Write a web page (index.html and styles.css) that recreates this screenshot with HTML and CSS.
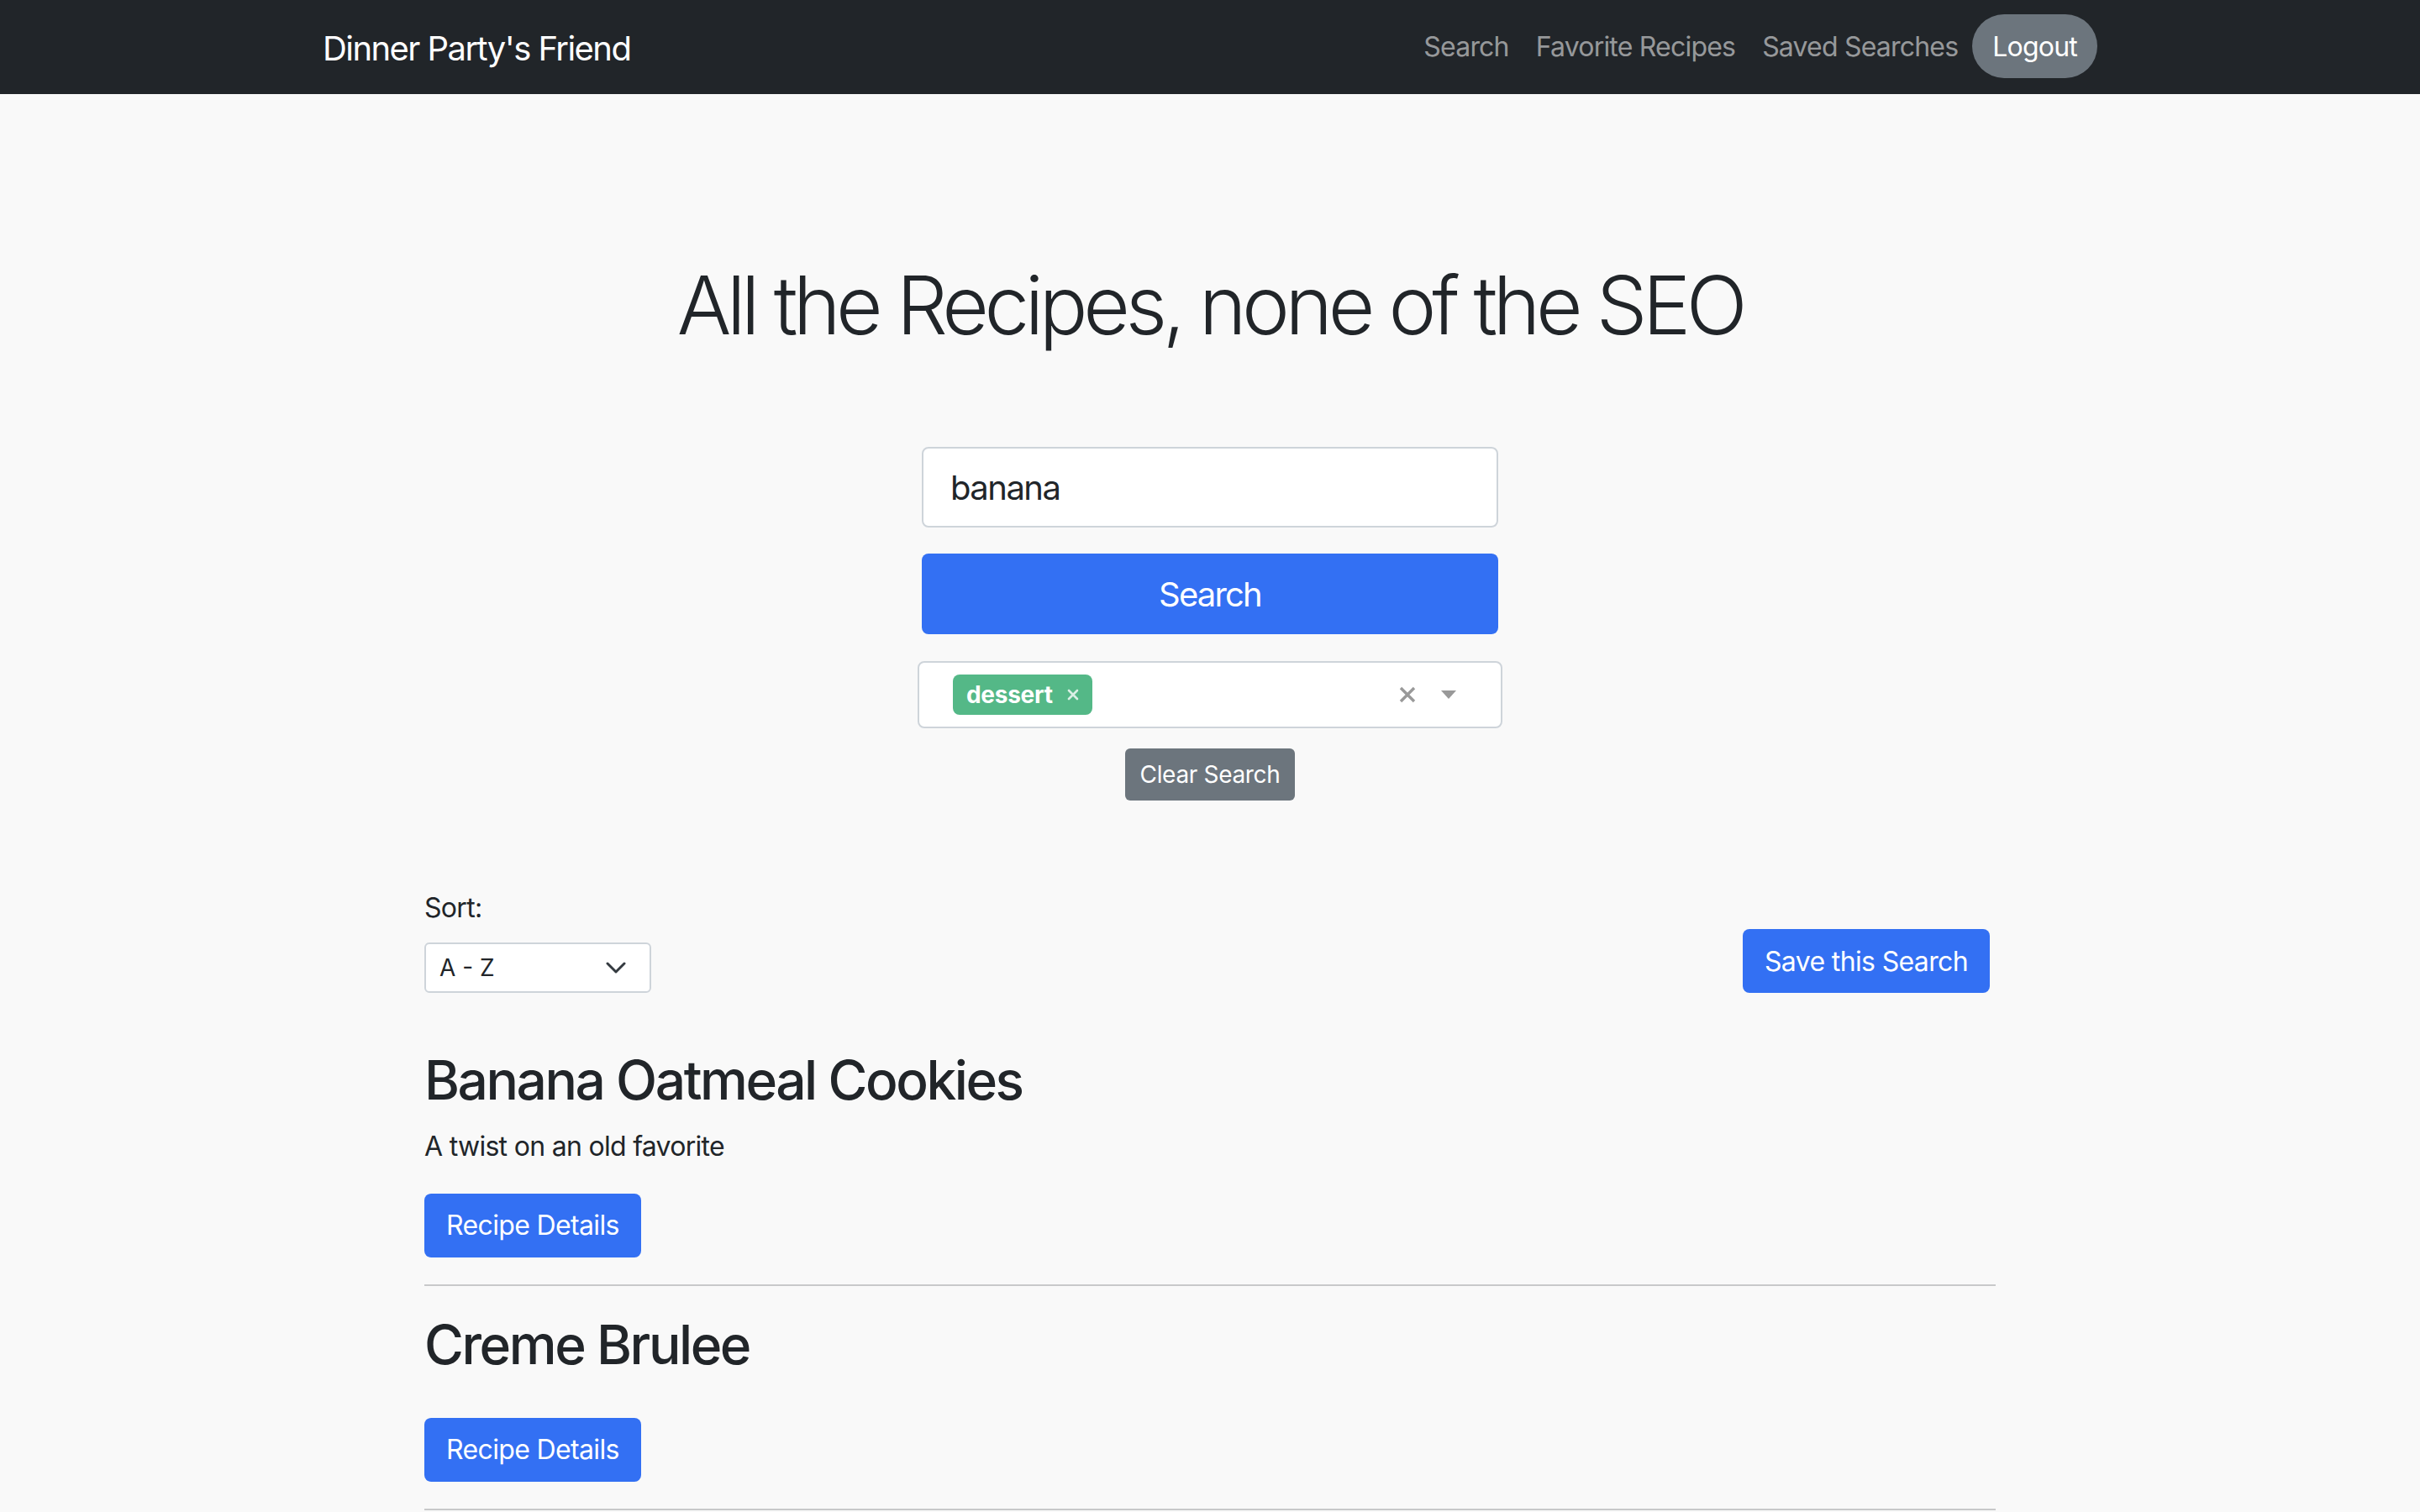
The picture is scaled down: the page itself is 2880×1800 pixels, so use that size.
FILE: index.html
```html
<!DOCTYPE html>
<html lang="en">
<head>
<meta charset="utf-8">
<title>Dinner Party's Friend</title>
<link rel="stylesheet" href="styles.css">
</head>
<body>
<nav class="navbar">
  <div class="nav-inner">
    <a class="brand" href="#">Dinner Party's Friend</a>
    <ul class="nav-links">
      <li><a class="nav-link" href="#">Search</a></li>
      <li><a class="nav-link" href="#">Favorite Recipes</a></li>
      <li><a class="nav-link" href="#">Saved Searches</a></li>
      <li><button class="logout" type="button">Logout</button></li>
    </ul>
  </div>
</nav>

<main class="page">
  <h1 class="hero-title">All the Recipes, none of the SEO</h1>

  <form class="search-form">
    <input class="search-input" type="text" value="banana">
    <button class="btn-search" type="button">Search</button>
    <div class="tag-select">
      <div class="tags">
        <span class="tag">dessert<svg class="tag-x" viewBox="0 0 14 14" width="14" height="14"><path d="M2 2 L12 12 M12 2 L2 12" stroke="currentColor" stroke-width="2.6" stroke-linecap="round" fill="none"/></svg></span>
      </div>
      <div class="indicators">
        <svg class="clear-x" viewBox="0 0 22 22" width="22" height="22"><path d="M3 3 L19 19 M19 3 L3 19" stroke="currentColor" stroke-width="3.4" fill="none"/></svg>
        <svg class="caret" viewBox="0 0 20 12" width="20" height="12"><path d="M1 1 L19 1 L10 11 Z" fill="currentColor"/></svg>
      </div>
    </div>
    <button class="btn-clear" type="button">Clear Search</button>
  </form>

  <section class="results">
    <div class="results-toolbar">
      <div class="sort">
        <label class="sort-label">Sort:</label>
        <div class="sort-select">
          <span>A - Z</span>
          <svg class="chevron" viewBox="0 0 24 14" width="24" height="14"><path d="M2 2 L12 12 L22 2" stroke="currentColor" stroke-width="3" stroke-linecap="round" stroke-linejoin="round" fill="none"/></svg>
        </div>
      </div>
      <button class="btn-primary btn-save" type="button">Save this Search</button>
    </div>

    <article class="recipe">
      <h2 class="recipe-title">Banana Oatmeal Cookies</h2>
      <p class="recipe-desc">A twist on an old favorite</p>
      <button class="btn-primary" type="button">Recipe Details</button>
      <hr class="divider">
    </article>

    <article class="recipe">
      <h2 class="recipe-title">Creme Brulee</h2>
      <p class="recipe-desc"></p>
      <button class="btn-primary" type="button">Recipe Details</button>
      <hr class="divider">
    </article>
  </section>
</main>
</body>
</html>
```

FILE: styles.css
```css
* { box-sizing: border-box; }

html, body {
  margin: 0;
  padding: 0;
}

body {
  background: #f9f9f9;
  color: #212529;
  font-family: Inter, "Noto Sans", "Liberation Sans", sans-serif;
  font-size: 32px;
  line-height: 1.5;
  letter-spacing: -0.022em;
}

/* Navbar */
.navbar {
  background: #212529;
  height: 112px;
}

.nav-inner {
  width: 2112px;
  height: 100%;
  margin: 0 auto;
  display: flex;
  align-items: center;
  justify-content: space-between;
}

.brand {
  color: #fff;
  font-size: 40px;
  line-height: 60px;
  letter-spacing: -0.039em;
  text-decoration: none;
  margin-top: 3px;
}

.nav-links {
  list-style: none;
  margin: 0;
  padding: 0;
  display: flex;
  align-items: center;
}

.nav-link {
  display: block;
  padding: 0 16px;
  color: rgba(255, 255, 255, 0.55);
  text-decoration: none;
  font-size: 32px;
  line-height: 48px;
  letter-spacing: -0.025em;
}

.logout {
  height: 76px;
  padding: 0 24px;
  border: 0;
  border-radius: 38px;
  background: #6c757d;
  color: #fff;
  font-family: inherit;
  font-size: 32px;
  letter-spacing: -0.025em;
  margin-left: 1px;
  margin-top: -2px;
}

/* Hero */
.hero-title {
  margin: 194px 0 111px;
  text-align: center;
  font-size: 96px;
  font-weight: 300;
  line-height: 1.2;
  letter-spacing: -0.056em;
}

/* Search form */
.search-form {
  width: 686px;
  margin: 0 auto;
  display: flex;
  flex-direction: column;
  align-items: center;
}

.search-input {
  width: 100%;
  height: 96px;
  padding: 0 32px;
  border: 2px solid #ced4da;
  border-radius: 8px;
  background: #fff;
  color: #212529;
  font-family: inherit;
  font-size: 40px;
  letter-spacing: -0.038em;
  margin-bottom: 31px;
}

.btn-search {
  width: 100%;
  height: 96px;
  border: 0;
  border-radius: 8px;
  background: #3370f3;
  color: #fff;
  font-family: inherit;
  font-size: 40px;
  letter-spacing: -0.045em;
  margin-bottom: 32px;
}

.tag-select {
  width: 696px;
  height: 80px;
  margin: 0 -5px 24px;
  border: 2px solid #ced4da;
  border-radius: 8px;
  background: #fff;
  display: flex;
  align-items: center;
  padding-left: 40px;
  padding-right: 52px;
}

.tags {
  flex: 1;
  display: flex;
  align-items: center;
}

.tag {
  height: 48px;
  display: inline-flex;
  align-items: center;
  gap: 17px;
  padding: 0 16px;
  border-radius: 8px;
  background: #54b887;
  color: #fff;
  font-size: 28px;
  font-weight: 700;
  letter-spacing: -0.01em;
}

.tag-x {
  color: rgba(255, 255, 255, 0.78);
}

.indicators {
  display: flex;
  align-items: center;
  gap: 28px;
  color: #999;
}

.btn-clear {
  height: 62px;
  padding: 0 18px;
  border: 0;
  border-radius: 6px;
  background: #6c757d;
  color: #fff;
  font-family: inherit;
  font-size: 28px;
  letter-spacing: -0.012em;
}

/* Results */
.results {
  width: 1870px;
  margin: 104px auto 0;
}

.results-toolbar {
  display: flex;
  justify-content: space-between;
  align-items: flex-end;
  margin-bottom: 66px;
}

.sort-label {
  display: block;
  margin-bottom: 17px;
}

.sort-select {
  width: 270px;
  height: 60px;
  border: 2px solid #ced4da;
  border-radius: 6px;
  background: #fff;
  display: flex;
  align-items: center;
  justify-content: space-between;
  padding: 0 28px 0 16px;
  font-size: 28px;
  letter-spacing: 0;
  color: #212529;
}

.chevron {
  color: #343a40;
}

.btn-primary {
  height: 76px;
  padding: 0 26px;
  border: 0;
  border-radius: 8px;
  background: #3370f3;
  color: #fff;
  font-family: inherit;
  font-size: 32px;
  letter-spacing: -0.02em;
}

.btn-save {
  margin-right: 7px;
}

.recipe {
  display: flex;
  flex-direction: column;
  align-items: flex-start;
}

.recipe-title {
  margin: 0 0 16px;
  font-size: 64px;
  font-weight: 500;
  line-height: 1.2;
  letter-spacing: -0.038em;
}

.recipe-desc {
  margin: 0 0 32px;
}

.divider {
  align-self: stretch;
  margin: 32px 0;
  border: 0;
  border-top: 2px solid #c8c9ca;
}
```
